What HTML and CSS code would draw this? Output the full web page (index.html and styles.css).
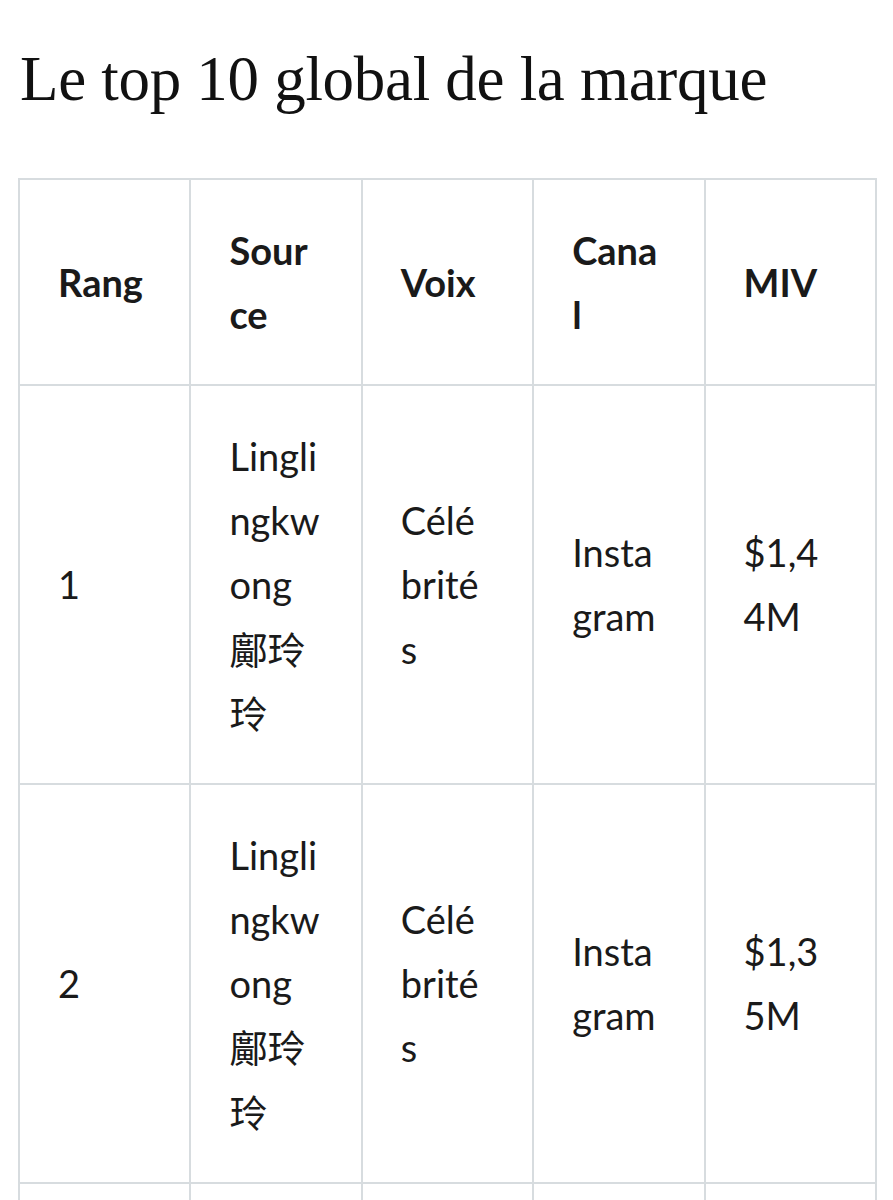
FILE: index.html
```html
<!DOCTYPE html>
<html lang="fr">
<head>
<meta charset="utf-8">
<title>Le top 10 global de la marque</title>
<link rel="stylesheet" href="styles.css">
</head>
<body>
<main class="page">
  <h1 class="title">Le top 10 global de la marque</h1>
  <table class="ranking">
    <thead>
      <tr>
        <th>Rang</th>
        <th>Source</th>
        <th>Voix</th>
        <th>Canal</th>
        <th>MIV</th>
      </tr>
    </thead>
    <tbody>
      <tr>
        <td>1</td>
        <td>Linglingkwong 鄺玲玲</td>
        <td>Célébrités</td>
        <td>Instagram</td>
        <td>$1,44M</td>
      </tr>
      <tr>
        <td>2</td>
        <td>Linglingkwong 鄺玲玲</td>
        <td>Célébrités</td>
        <td>Instagram</td>
        <td>$1,35M</td>
      </tr>
      <tr>
        <td>3</td>
        <td>Linglingkwong 鄺玲玲</td>
        <td>Célébrités</td>
        <td>Instagram</td>
        <td>$1,20M</td>
      </tr>
    </tbody>
  </table>
</main>
</body>
</html>
```

FILE: styles.css
```css
html, body {
  margin: 0;
  padding: 0;
  background: #ffffff;
}

.page {
  padding: 0 16px 0 18px;
}

.title {
  margin: 0;
  padding: 43px 0 0 2px;
  font-family: "Liberation Serif", "DejaVu Serif", serif;
  font-weight: 400;
  font-size: 63px;
  line-height: 72px;
  color: #111111;
  letter-spacing: -0.3px;
}

.ranking {
  margin-top: 63px;
  width: 859px;
  border-collapse: collapse;
  table-layout: fixed;
  font-family: Lato, "Noto Sans CJK TC", sans-serif;
  font-size: 38px;
  line-height: 64.3px;
  color: #1a1a1a;
}

.ranking th,
.ranking td {
  border: 2px solid #d7dcdf;
  padding: 37.7px 38px;
  text-align: left;
  vertical-align: middle;
  word-break: break-all;
  overflow-wrap: anywhere;
}

.ranking th {
  font-weight: 700;
}

.ranking td {
  font-weight: 400;
}
```
